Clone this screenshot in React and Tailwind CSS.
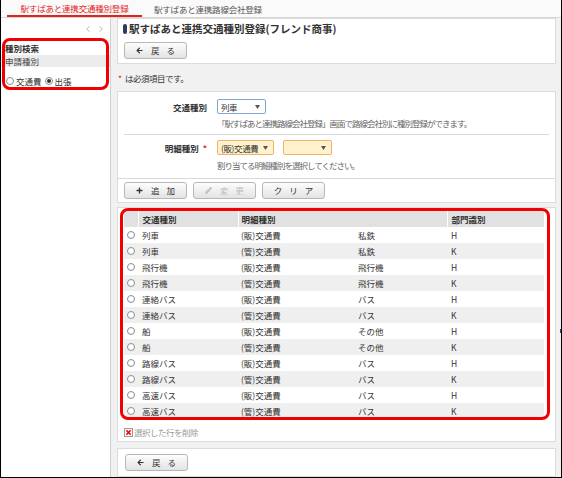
import React from "react";
import { FaArrowLeft, FaPlus, FaPencilAlt } from "react-icons/fa";
import { ChevronLeft, ChevronRight } from "lucide-react";

const rows = [
  ["列車", "(販)交通費", "私鉄", "H"],
  ["列車", "(管)交通費", "私鉄", "K"],
  ["飛行機", "(販)交通費", "飛行機", "H"],
  ["飛行機", "(管)交通費", "飛行機", "K"],
  ["連絡バス", "(販)交通費", "バス", "H"],
  ["連絡バス", "(管)交通費", "バス", "K"],
  ["船", "(販)交通費", "その他", "H"],
  ["船", "(管)交通費", "その他", "K"],
  ["路線バス", "(販)交通費", "バス", "H"],
  ["路線バス", "(管)交通費", "バス", "K"],
  ["高速バス", "(販)交通費", "バス", "H"],
  ["高速バス", "(管)交通費", "バス", "K"],
];

const Radio = ({ checked }) => (
  <span className="w-[8px] h-[8px] rounded-full border border-[#8c8c8c] bg-white flex items-center justify-center shrink-0">
    {checked && <span className="w-[4px] h-[4px] rounded-full bg-[#333]"></span>}
  </span>
);

const Btn = ({ icon, chars, disabled }) => (
  <button className={`h-[17px] w-[63px] flex items-center justify-center gap-[7px] rounded-[3px] border border-[#b7b7b7] bg-linear-to-b from-[#fdfdfd] to-[#e3e3e3] text-[8.5px] leading-none ${disabled ? "text-[#bcbcbc]" : "text-[#333]"}`}>
    {icon && <span className="mr-[1px] flex items-center">{icon}</span>}
    {chars.map((c, i) => <span key={i}>{c}</span>)}
  </button>
);

const Caret = () => (
  <svg width="5" height="4" viewBox="0 0 5 4"><path d="M0 0h5L2.5 4z" fill="#555" /></svg>
);

const Sel = ({ text, w, blue }) => (
  <div className={`h-[15px] ${w} flex items-center justify-between pl-[3px] pr-[5px] border rounded-[2px] text-[8.5px] tracking-[-0.4px] ${blue ? "border-[#7ea6d8] bg-white" : "border-[#f0b36c] bg-[#fff2cc]"}`}>
    <span>{text}</span>
    <Caret />
  </div>
);

const Panel = ({ className = "", children }) => (
  <div className={`bg-white border border-[#dcdcdc] ${className}`}>{children}</div>
);

export default function App() {
  return (
    <div className="relative w-[562px] h-[478px] overflow-hidden flex flex-col border-x border-b border-black bg-white text-[#333] font-['Noto_Sans_CJK_JP','Noto_Sans',sans-serif] text-[8.5px] leading-[12px]">
      {/* Tabs */}
      <div className="h-[18px] shrink-0 flex items-end bg-[#fafafa] border-b border-[#d6d6d6]">
        <div className="ml-[6px] w-[135px] h-[17px] flex items-center justify-center border-b-2 border-[#e2231a] text-[#e2231a] tracking-[-0.2px]">
          駅すぱあと連携交通種別登録
        </div>
        <div className="ml-[12px] h-[17px] flex items-center text-[#555] tracking-[-0.2px]">駅すぱあと連携路線会社登録</div>
      </div>

      <div className="flex-1 flex min-h-0">
        {/* Sidebar */}
        <div className="w-[110px] shrink-0 border-r border-[#cfcfcf] bg-white">
          <div className="h-[20px] flex items-center justify-end gap-[3px] pr-[4px] pt-[2px] text-[#888]">
            <ChevronLeft size={10} strokeWidth={1.5} />
            <ChevronRight size={10} strokeWidth={1.5} />
          </div>
          <div className="relative pt-[4px] pb-[3px]">
            <div className="pl-[4px] font-bold leading-[12px]">種別検索</div>
            <div className="mt-[1px] h-[12px] pl-[4px] bg-[#ececec] text-[#444] leading-[12px]">申請種別</div>
            <div className="mt-[8px] h-[12px] pl-[5px] flex items-center gap-[2px]">
              <Radio />
              <span>交通費</span>
              <span className="ml-[1px]"><Radio checked /></span>
              <span>出張</span>
            </div>
            <div className="absolute left-[1px] right-[1px] top-0 bottom-0 border-[3px] border-[#f00000] rounded-[8px]"></div>
          </div>
        </div>

        {/* Main */}
        <div className="flex-1 bg-[#f1f1f1] pl-[6px] pr-[5px] flex flex-col">
          <Panel className="pt-[3px] pb-[4px] pl-[5px]">
            <div className="h-[14px] flex items-center gap-[2px] text-[10.5px] font-bold leading-[14px]">
              <span className="w-[4px] h-[10px] rounded-[2px] bg-[#2d3a66]"></span>
              <span>駅すぱあと連携交通種別登録(フレンド商事)</span>
            </div>
            <div className="mt-[6px] pl-[1px]">
              <Btn icon={<FaArrowLeft size={7} />} chars={["戻", "る"]} />
            </div>
          </Panel>

          <div className="mt-[8px] mb-[7px] pl-[1px] h-[12px] flex items-center gap-[3px]">
            <span className="text-[#e2231a]">*</span>
            <span className="tracking-[-0.5px]">は必須項目です。</span>
          </div>

          <Panel>
            <div className="px-[6px]">
              <div className="pt-[7px] pb-[6px] border-b border-[#d9d9d9]">
                <div className="flex items-center">
                  <div className="w-[83px] text-right font-bold">交通種別</div>
                  <div className="ml-[10px]"><Sel text="列車" w="w-[49px]" blue /></div>
                </div>
                <div className="mt-[4px] ml-[93px] h-[10px] leading-[10px] text-[#666] tracking-[-1px]">
                  「駅すぱあと連携路線会社登録」画面で路線会社別に種別登録ができます。
                </div>
              </div>
              <div className="pt-[5px] pb-[8px]">
                <div className="flex items-center">
                  <div className="w-[83px] text-right font-bold">
                    明細種別<span className="ml-[4px] text-[#e2231a]">*</span>
                  </div>
                  <div className="ml-[10px] flex gap-[9px]">
                    <Sel text="(販)交通費" w="w-[57px]" />
                    <Sel text="" w="w-[49px]" />
                  </div>
                </div>
                <div className="mt-[5px] ml-[93px] h-[10px] leading-[10px] text-[#666] tracking-[-1px]">割り当てる明細種別を選択してください。</div>
              </div>
            </div>
            <div className="border-t border-[#d9d9d9] pt-[3px] pb-[3px] pl-[6px] flex gap-[6px]">
              <Btn icon={<FaPlus size={7} />} chars={["追", "加"]} />
              <Btn icon={<FaPencilAlt size={7} />} chars={["変", "更"]} disabled />
              <Btn chars={["ク", "リ", "ア"]} />
            </div>
          </Panel>

          <Panel className="mt-[4px] pt-[2px] pb-[3px] pl-[6px]">
            <div className="relative w-[420px]">
              <table className="w-[420px] table-fixed border-collapse">
                <colgroup>
                  <col className="w-[14px]" />
                  <col className="w-[100px]" />
                  <col className="w-[117px]" />
                  <col className="w-[92px]" />
                  <col className="w-[97px]" />
                </colgroup>
                <thead>
                  <tr className="h-[17px] bg-[#e1e1e1] font-bold text-left">
                    <th className="border-r border-white"></th>
                    <th className="pl-[4px] border-r border-white font-bold">交通種別</th>
                    <th colSpan={2} className="pl-[3px] border-r border-white font-bold">明細種別</th>
                    <th className="pl-[4px] font-bold">部門識別</th>
                  </tr>
                </thead>
                <tbody>
                  {rows.map((r, i) => (
                    <tr key={i} className={`h-[16px] ${i % 2 ? "bg-[#efefef]" : "bg-white"}`}>
                      <td className="pl-[3px]"><Radio /></td>
                      <td className="pl-[4px]">{r[0]}</td>
                      <td className="pl-[3px]">{r[1]}</td>
                      <td className="pl-[3px]">{r[2]}</td>
                      <td className="pl-[4px]">{r[3]}</td>
                    </tr>
                  ))}
                </tbody>
              </table>
              <div className="absolute -left-[4px] -right-[6px] -top-[2px] -bottom-[1px] border-[3px] border-[#f00000] rounded-[8px]"></div>
            </div>
            <div className="mt-[7px] h-[12px] flex items-center gap-[1px] text-[#999]">
              <svg width="9" height="9" viewBox="0 0 9 9">
                <rect x="0.5" y="0.5" width="8" height="8" fill="#fff" stroke="#999" />
                <path d="M2.3 2.3l4.4 4.4M6.7 2.3l-4.4 4.4" stroke="#e00" strokeWidth="1.6" />
              </svg>
              <span className="tracking-[-0.5px]">選択した行を削除</span>
            </div>
          </Panel>

          <Panel className="mt-[6px] flex-1 pt-[5px] pl-[7px]">
            <Btn icon={<FaArrowLeft size={7} />} chars={["戻", "る"]} />
          </Panel>
        </div>
      </div>

      <div className="absolute left-[559px] top-[329px] w-[2px] h-[4px] bg-[#2c4a7a]"></div>
    </div>
  );
}
